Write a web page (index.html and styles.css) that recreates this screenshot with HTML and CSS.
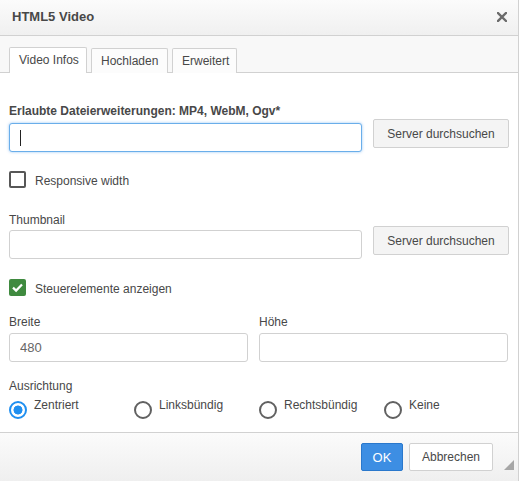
FILE: index.html
```html
<!DOCTYPE html>
<html lang="de">
<head>
<meta charset="utf-8">
<title>HTML5 Video</title>
<link rel="stylesheet" href="styles.css">
</head>
<body>
<div class="dialog">
  <div class="titlebar">
    <span class="title">HTML5 Video</span>
    <svg class="close" width="10" height="10" viewBox="0 0 10 10"><path d="M1 1 L9 9 M9 1 L1 9" stroke="#6b6b6b" stroke-width="2.4" stroke-linecap="square"/></svg>
  </div>
  <div class="tabs">
    <div class="tab active tab-infos">Video Infos</div>
    <div class="tab tab-upload">Hochladen</div>
    <div class="tab tab-adv">Erweitert</div>
  </div>
  <div class="content">
    <div class="browse-row first">
      <div class="field">
        <label class="label bold">Erlaubte Dateierweiterungen: MP4, WebM, Ogv*</label>
        <div class="input-wrap">
          <input class="input focus" type="text">
          <span class="caret"></span>
        </div>
      </div>
      <button class="btn browse">Server durchsuchen</button>
    </div>

    <div class="check-row first-check">
      <span class="checkbox"></span>
      <span class="check-label">Responsive width</span>
    </div>

    <div class="browse-row thumb">
      <div class="field">
        <label class="label">Thumbnail</label>
        <input class="input thumb-input" type="text">
      </div>
      <button class="btn browse">Server durchsuchen</button>
    </div>

    <div class="check-row second-check">
      <span class="checkbox checked">
        <svg width="17" height="17" viewBox="0 0 17 17"><path d="M4 8.6 L7.1 11.6 L13 5.4" fill="none" stroke="#fff" stroke-width="2.2"/></svg>
      </span>
      <span class="check-label">Steuerelemente anzeigen</span>
    </div>

    <div class="pair">
      <div class="field">
        <label class="label">Breite</label>
        <input class="input size-input" type="text" value="480">
      </div>
      <div class="field">
        <label class="label">Höhe</label>
        <input class="input size-input" type="text">
      </div>
    </div>

    <div class="align">
      <div class="label">Ausrichtung</div>
      <div class="radios">
        <div class="radio-item"><span class="radio on"></span><span class="radio-label">Zentriert</span></div>
        <div class="radio-item"><span class="radio"></span><span class="radio-label">Linksbündig</span></div>
        <div class="radio-item"><span class="radio"></span><span class="radio-label">Rechtsbündig</span></div>
        <div class="radio-item"><span class="radio"></span><span class="radio-label">Keine</span></div>
      </div>
    </div>
  </div>
  <div class="footer">
    <button class="btn ok">OK</button>
    <button class="btn cancel">Abbrechen</button>
    <span class="resize"></span>
  </div>
</div>
</body>
</html>
```
FILE: styles.css
```css
* { box-sizing: border-box; }

html, body {
  margin: 0;
  padding: 0;
  background: #fff;
}

body {
  font-family: "Liberation Sans", Arial, sans-serif;
  font-size: 12px;
  line-height: 16px;
  color: #484848;
}

.dialog {
  position: relative;
  width: 519px;
  height: 481px;
  border-right: 1px solid #d1d1d1;
  display: flex;
  flex-direction: column;
}

.titlebar {
  height: 36px;
  border-bottom: 1px solid #d1d1d1;
  background: linear-gradient(#fbfbfb, #f0f0f0);
  display: flex;
  justify-content: space-between;
  align-items: flex-start;
  padding: 9px 11px 0 12px;
}

.title {
  font-size: 13px;
  font-weight: bold;
  line-height: 16px;
  color: #484848;
}

.close {
  margin-top: 3px;
}

.tabs {
  height: 37px;
  background: #f8f8f8;
  border-bottom: 1px solid #d1d1d1;
  display: flex;
  align-items: flex-end;
  gap: 4px;
  padding-left: 9px;
}

.tab {
  height: 25px;
  border: 1px solid #d1d1d1;
  border-bottom: none;
  border-radius: 2px 2px 0 0;
  background: #fcfcfc;
  padding: 4px 0 0 9px;
  line-height: 16px;
  color: #484848;
  margin-bottom: -1px;
}

.tab.active {
  background: #fff;
  height: 26px;
}

.tab-infos { width: 78px; }
.tab-upload { width: 77px; }
.tab-adv { width: 65px; }

.content {
  flex: 1;
  padding: 30px 10px 0 9px;
}

.label {
  display: block;
  line-height: 16px;
  color: #484848;
}

.bold { font-weight: bold; }

.browse-row {
  display: grid;
  grid-template-columns: 353px 136px;
  column-gap: 11px;
  align-items: end;
}

.browse-row .btn {
  margin-bottom: 4px;
}

.field {
  display: flex;
  flex-direction: column;
}

.input-wrap {
  position: relative;
  margin-top: 4px;
}

.input {
  display: block;
  width: 100%;
  height: 29px;
  border: 1px solid #d1d1d1;
  border-radius: 3px;
  background: #fff;
  padding: 0 10px;
  font-family: "Liberation Sans", Arial, sans-serif;
  font-size: 13px;
  color: #666;
  outline: none;
}

.input.focus {
  border-color: #6aaeea;
  box-shadow: 0 0 3px rgba(64, 150, 235, 0.55);
}

.caret {
  position: absolute;
  left: 11px;
  top: 7px;
  width: 1px;
  height: 16px;
  background: #222;
}

.btn {
  font-family: "Liberation Sans", Arial, sans-serif;
  font-size: 12px;
  color: #484848;
  border: 1px solid #d1d1d1;
  border-radius: 2px;
  background: #f4f4f4;
  height: 29px;
  padding: 0;
  text-align: center;
  cursor: default;
}

.check-row {
  display: flex;
  align-items: flex-start;
  gap: 9px;
  height: 18px;
}

.first-check { margin-top: 19px; }
.second-check { margin-top: 20px; }

.checkbox {
  width: 17px;
  height: 17px;
  border: 2px solid #575757;
  border-radius: 2px;
  background: #fff;
  flex: none;
  display: block;
}

.checkbox.checked {
  border: none;
  background: #3f8a3f;
}

.checkbox.checked svg { display: block; }

.check-label {
  margin-top: 2px;
  line-height: 16px;
}

.thumb { margin-top: 23px; }
.thumb-input { margin-top: 2px; }

.pair {
  display: grid;
  grid-template-columns: 239px 249px;
  column-gap: 11px;
  margin-top: 17px;
}

.size-input { margin-top: 3px; }

.align { margin-top: 16px; }

.radios {
  display: grid;
  grid-template-columns: 125px 125px 125px 125px;
  margin-top: 3px;
}

.radio-item {
  display: flex;
  align-items: flex-start;
  gap: 7px;
}

.radio {
  width: 18px;
  height: 18px;
  border: 2px solid #616161;
  border-radius: 50%;
  margin-top: 4px;
  flex: none;
  background: #fff;
}

.radio.on {
  border-color: #1f8ff0;
  background: radial-gradient(circle, #1f8ff0 0, #1f8ff0 4.2px, #fff 4.8px);
}

.radio-label { line-height: 16px; }

.footer {
  height: 49px;
  border-top: 1px solid #d1d1d1;
  background: linear-gradient(#fbfbfb, #efefef);
  display: flex;
  justify-content: flex-end;
  align-items: flex-start;
  gap: 6px;
  padding: 10px 25px 0 0;
}

.footer .btn {
  height: 28px;
}

.ok {
  width: 42px;
  background: #3d8ee3;
  border-color: #2a78cc;
  color: #fff;
  font-size: 13px;
}

.cancel {
  width: 84px;
  background: #fff;
}

.resize {
  position: absolute;
  right: 4px;
  bottom: 11px;
  width: 0;
  height: 0;
  border-left: 10px solid transparent;
  border-bottom: 10px solid #a6a6a6;
}
```
